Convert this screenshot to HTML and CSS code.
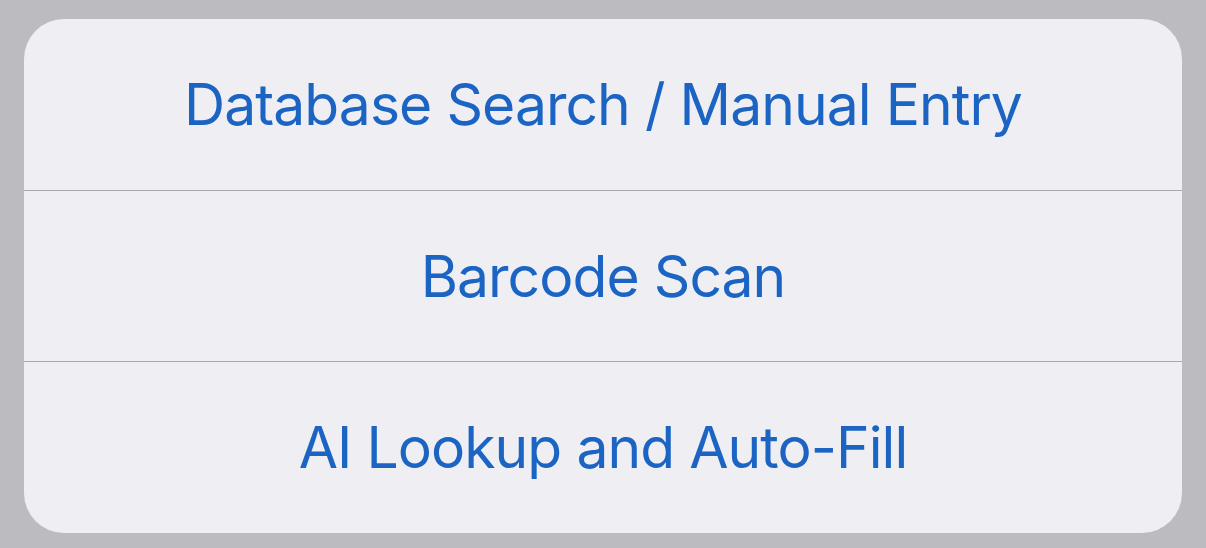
FILE: index.html
```html
<!DOCTYPE html>
<html>
<head>
<meta charset="utf-8">
<link rel="stylesheet" href="styles.css">
</head>
<body>
<div class="sheet">
  <div class="action">Database Search / Manual Entry</div>
  <div class="action">Barcode Scan</div>
  <div class="action">AI Lookup and Auto-Fill</div>
</div>
</body>
</html>
```
FILE: styles.css
```css
html, body {
  margin: 0;
  padding: 0;
  width: 1206px;
  height: 548px;
  background: #bcbbc0;
  overflow: hidden;
}
body {
  box-sizing: border-box;
  padding: 19px 24px 15px 24px;
  display: flex;
}
.sheet {
  flex: 1;
  background: #efeff3;
  border-radius: 40px;
  display: flex;
  flex-direction: column;
  overflow: hidden;
}
.action {
  flex: 1;
  display: flex;
  align-items: center;
  justify-content: center;
  font-family: "Inter", "Liberation Sans", sans-serif;
  font-size: 57px;
  color: #1c64c3;
  letter-spacing: -0.95px;
}
.action + .action {
  border-top: 1px solid #a9a9ad;
}
```
